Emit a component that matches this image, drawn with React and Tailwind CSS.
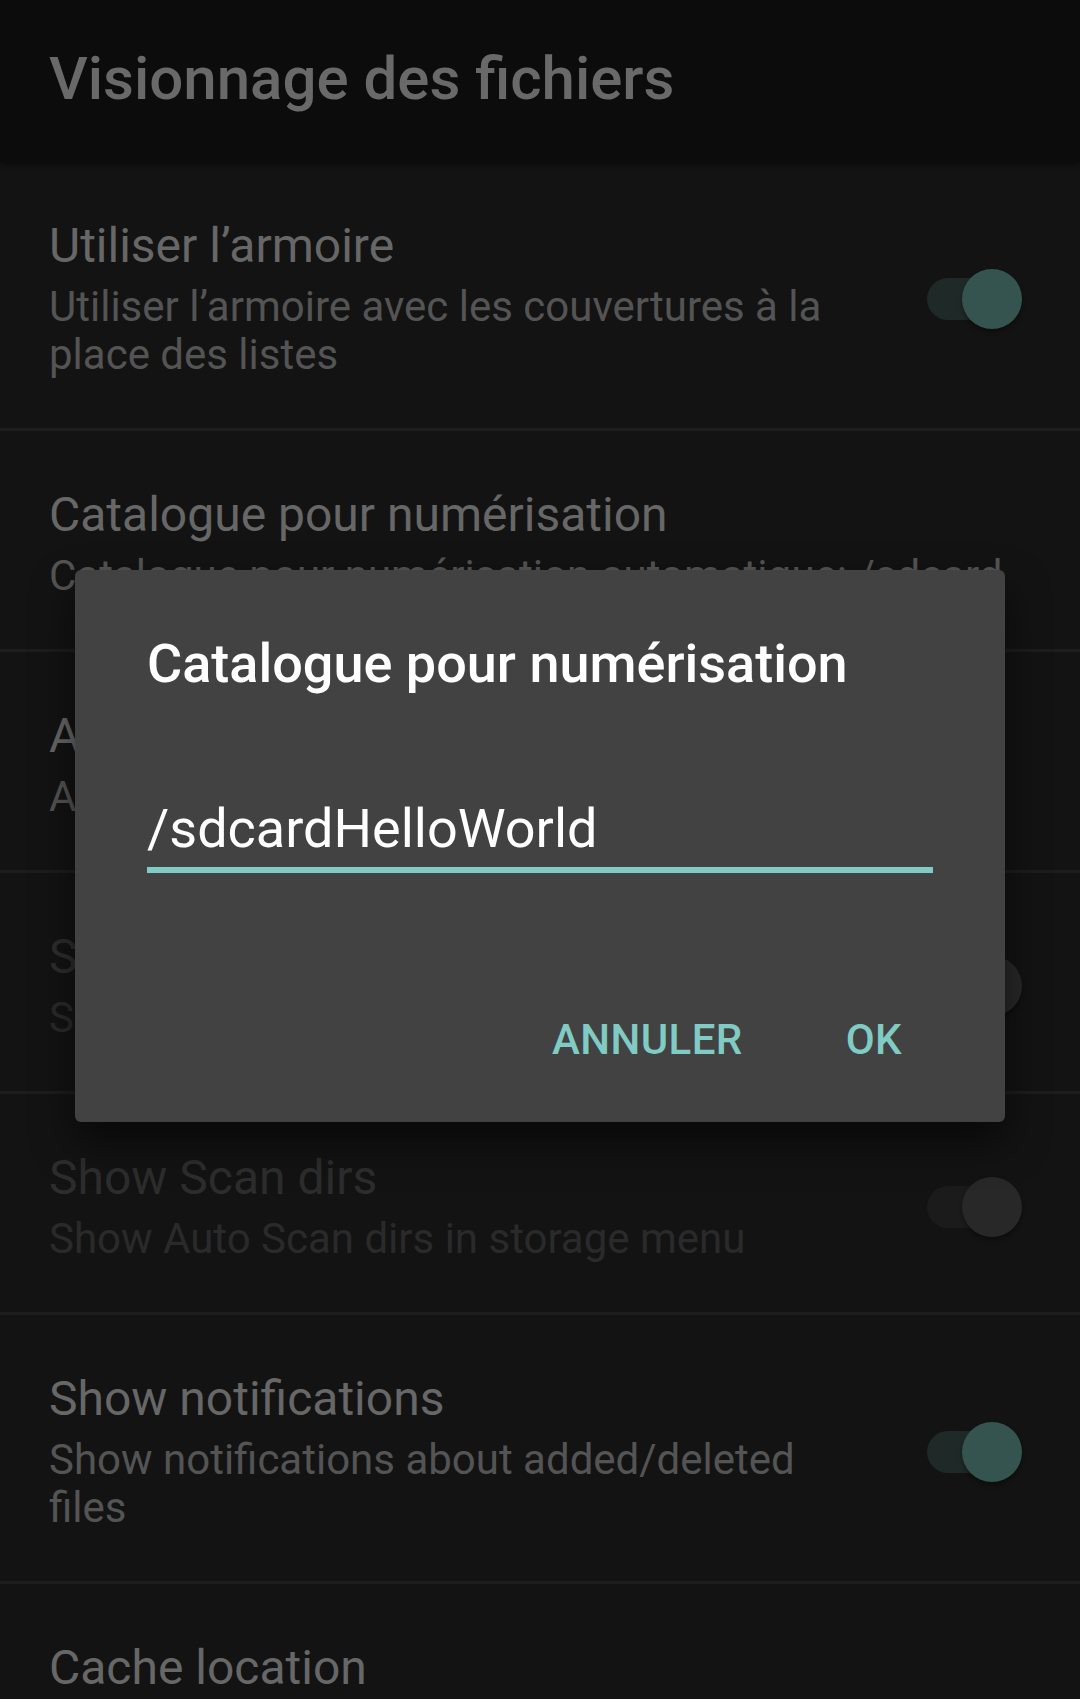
const rows = [
  {
    title: "Utiliser l’armoire",
    summary: "Utiliser l’armoire avec les couvertures à la place des listes",
    toggle: "on",
  },
  {
    title: "Catalogue pour numérisation",
    summary: "Catalogue pour numérisation automatique: /sdcard",
  },
  {
    title: "Analyse automatique",
    summary: "Analyser les catalogues au démarrage",
  },
  {
    title: "Scan on startup",
    summary: "Scan Auto Scan dirs on startup",
    toggle: "dim",
    disabled: true,
  },
  {
    title: "Show Scan dirs",
    summary: "Show Auto Scan dirs in storage menu",
    toggle: "dim",
    disabled: true,
  },
  {
    title: "Show notifications",
    summary: "Show notifications about added/deleted files",
    toggle: "on",
  },
  {
    title: "Cache location",
    summary: "/storage/emulated/0/Android/data",
  },
];

function Toggle({ state }) {
  const on = state === "on";
  return (
    <div className="relative w-[95px] h-[60px] shrink-0">
      <div
        className={
          "absolute left-0 top-[9px] w-[88px] h-[42px] rounded-full " +
          (on ? "bg-[#1f2927]" : "bg-[#1b1b1b]")
        }
      />
      <div
        className={
          "absolute right-0 top-0 w-[60px] h-[60px] rounded-full shadow-[0_3px_4px_rgba(0,0,0,0.35)] " +
          (on ? "bg-[#355450]" : "bg-[#282828]")
        }
      />
    </div>
  );
}

function PrefRow({ row }) {
  return (
    <div className="border-b-[3px] border-[#1d1d1d]">
      <div className="flex items-center pl-[49px] pr-[58px] pt-[56px] pb-[49px]">
        <div className="flex-1 min-w-0">
          <div
            className={
              "text-[48px] leading-[56px] whitespace-nowrap " +
              (row.disabled ? "text-[#2d2d2d]" : "text-[#676767]")
            }
          >
            {row.title}
          </div>
          <div
            className={
              "mt-[9px] text-[42px] leading-[48px] " +
              (row.toggle ? "w-[800px] " : "whitespace-nowrap ") +
              (row.disabled ? "text-[#2a2a2a]" : "text-[#545454]")
            }
          >
            {row.summary}
          </div>
        </div>
        {row.toggle && <Toggle state={row.toggle} />}
      </div>
    </div>
  );
}

export default function App() {
  return (
    <div
      className="relative w-[1080px] h-[1699px] overflow-hidden bg-[#131313]"
      style={{ fontFamily: "Roboto, 'Noto Sans', sans-serif" }}
    >
      {/* TOOLBAR */}
      <header className="relative z-10 h-[162px] bg-[#0c0c0c] pl-[49px] pt-[44px] shadow-[0_2px_6px_rgba(0,0,0,0.5)]">
        <h1 className="text-[60px] leading-[70px] font-medium text-[#696969]">
          Visionnage des fichiers
        </h1>
      </header>

      {/* PREFERENCES */}
      <div>
        {rows.map((row) => (
          <PrefRow key={row.title} row={row} />
        ))}
      </div>

      {/* DIALOG */}
      <div className="absolute z-20 left-[75px] top-[570px] w-[930px] bg-[#424242] rounded-[6px] shadow-[0_20px_40px_rgba(0,0,0,0.55)]">
        <div className="px-[72px] pt-[62px]">
          <h2 className="text-[54px] leading-[64px] font-medium text-white">
            Catalogue pour numérisation
          </h2>
          <div className="mt-[101px] text-[54px] leading-[64px] text-white">
            /sdcardHelloWorld
          </div>
          <div className="mt-[6px] h-[6px] bg-[#80cbc4]" />
        </div>
        <div className="flex justify-end items-center gap-[103px] pr-[103px] pt-[143px] pb-[58px]">
          <button className="text-[42px] leading-[48px] font-medium tracking-[0.01em] text-[#80cbc4]">
            ANNULER
          </button>
          <button className="text-[42px] leading-[48px] font-medium tracking-[0.01em] text-[#80cbc4]">
            OK
          </button>
        </div>
      </div>
    </div>
  );
}
